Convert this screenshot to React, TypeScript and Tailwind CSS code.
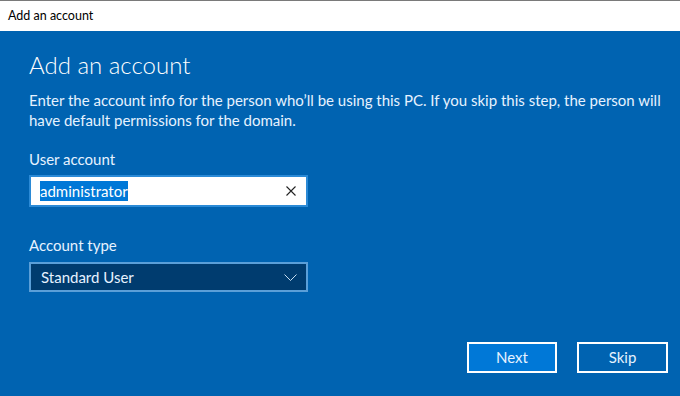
const font = { fontFamily: 'Lato, "Noto Sans", sans-serif' };

function ClearIcon() {
  return (
    <svg className="ml-auto h-[10px] w-[10px]" viewBox="0 0 10 10" fill="none" stroke="#222" strokeWidth={1.1}>
      <path d="M0.5 0.5l9 9M9.5 0.5l-9 9" />
    </svg>
  );
}

function Chevron() {
  return (
    <svg className="ml-auto h-[7px] w-[13px]" viewBox="0 0 13 7" fill="none" stroke="#c5dcf0" strokeWidth={1}>
      <path d="M0.5 0.5l6 6 6-6" />
    </svg>
  );
}

export default function App() {
  return (
    <div className="flex h-[396px] w-[680px] flex-col overflow-hidden bg-white" style={font}>
      <div className="h-px bg-[#7a7a7a]" />
      <div className="flex h-[30px] items-center pl-2 text-[12.5px] text-black">Add an account</div>

      <div className="flex flex-1 flex-col bg-[#0063b1] pl-[29px] pr-3 pb-[23px] text-white">
        <h1 className="mt-[18px] text-[24px] font-light leading-[32px]">Add an account</h1>
        <p className="mt-[9px] text-[15px] leading-[20px] text-[#e6f2ff]">
          Enter the account info for the person who’ll be using this PC. If you skip this step, the person will
          have default permissions for the domain.
        </p>

        <label className="mt-[19px] text-[15px] leading-[20px] text-[#e6f2ff]">User account</label>
        <div className="mt-[6px] flex h-[32px] w-[279px] items-center border-2 border-[#2b8ad6] bg-white pl-[9px] pr-[10px]">
          <span className="bg-[#0078d7] text-[15px] leading-[20px] text-white">administrator</span>
          <ClearIcon />
        </div>

        <label className="mt-[28px] text-[15px] leading-[20px] text-[#e6f2ff]">Account type</label>
        <div className="mt-[7px] flex h-[30px] w-[279px] items-center border-2 border-[#5b9fd8] bg-[#003c6f] pl-[10px] pr-[9px]">
          <span className="text-[15px] leading-[20px] text-[#e6f2ff]">Standard User</span>
          <Chevron />
        </div>

        <div className="mt-auto flex justify-end gap-[20px]">
          <button className="h-[31px] w-[90px] border-2 border-white bg-[#0078d7] text-[15px] text-[#e6f2ff]">
            Next
          </button>
          <button className="h-[31px] w-[91px] border-2 border-white bg-[#0063b1] text-[15px] text-[#e6f2ff]">
            Skip
          </button>
        </div>
      </div>
    </div>
  );
}
